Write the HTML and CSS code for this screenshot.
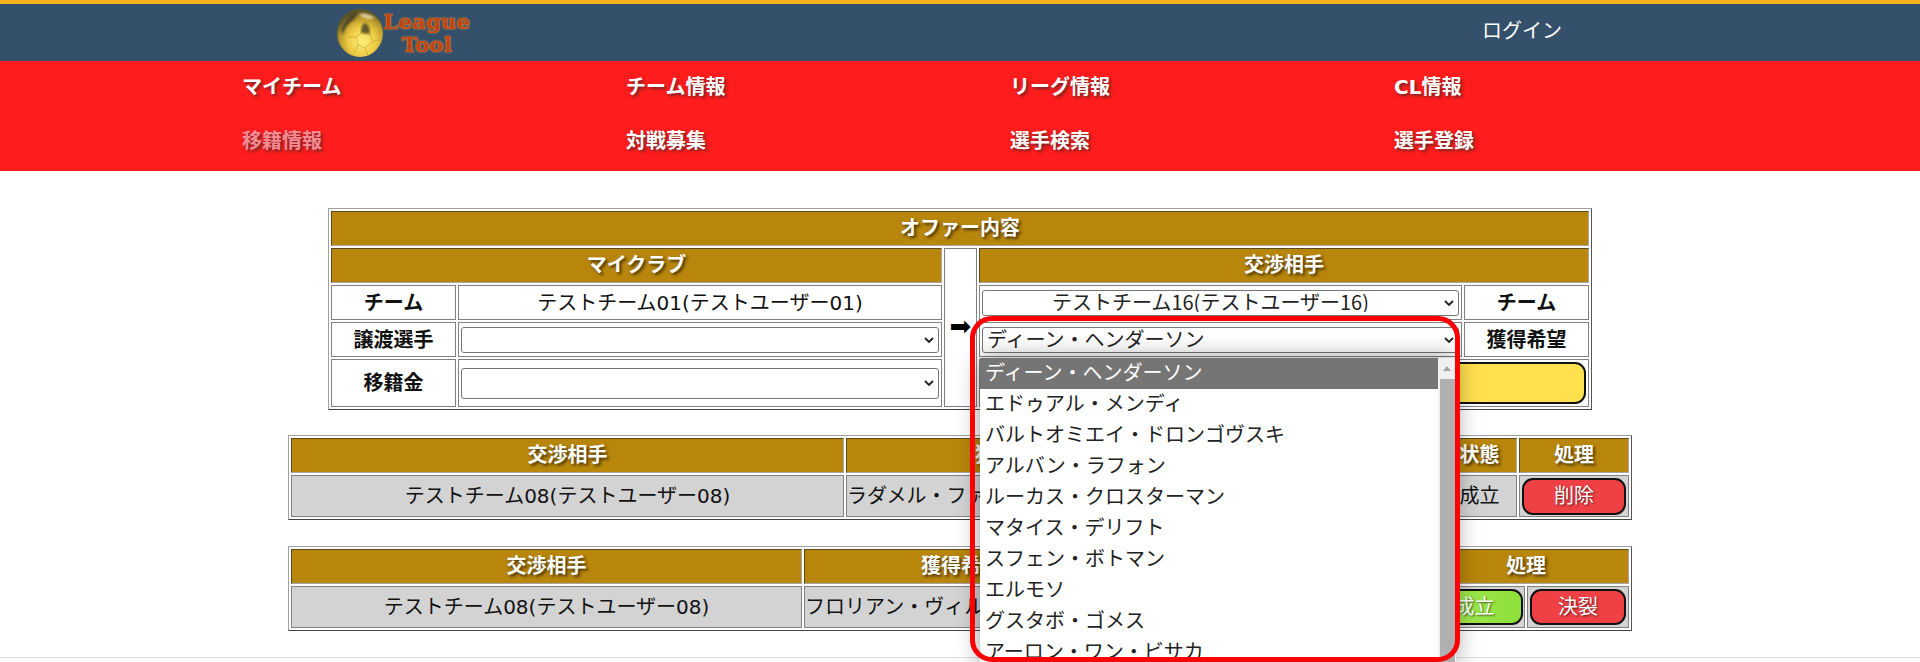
FILE: index.html
```html
<!DOCTYPE html>
<html lang="ja">
<head>
<meta charset="utf-8">
<title>League Tool</title>
<link rel="stylesheet" href="styles.css">
</head>
<body>
<header class="topbar">
  <a class="logo">
    <svg class="ball" viewBox="0 0 46 48" width="46" height="48">
      <defs>
        <radialGradient id="gold" cx="55%" cy="68%" r="62%">
          <stop offset="0" stop-color="#fdf07e"/>
          <stop offset=".5" stop-color="#ecca42"/>
          <stop offset=".82" stop-color="#b3942a"/>
          <stop offset="1" stop-color="#5f5426"/>
        </radialGradient>
        <filter id="soft"><feGaussianBlur stdDeviation="1.1"/></filter>
      </defs>
      <ellipse cx="23" cy="24" rx="23" ry="24" fill="url(#gold)"/>
      <path d="M4 20 Q9 7 20 3 Q20 9 14 13 Q8 17 6 26 Z" fill="#3e3a28" opacity=".8" filter="url(#soft)"/>
      <path d="M22 5 Q30 3 38 9 Q32 11 28 9 Q24 8 22 5 Z" fill="#f4ecc0" opacity=".7" filter="url(#soft)"/>
      <path d="M24 24 Q24 15 28 14 Q33 16 33 25 Z" fill="#4e4526" opacity=".85" filter="url(#soft)"/>
      <path d="M19 28 L24 24 L33 25 L36 33 L28 39 L21 36 Z M19 28 L10 28 M36 33 L43 30 M21 36 L17 44 M28 39 L31 46" fill="none" stroke="#b4951f" stroke-width=".6" opacity=".8"/>
    </svg>
    <span class="logo-text"><span>League</span><span>Tool</span></span>
  </a>
  <a class="login">ログイン</a>
</header>
<nav class="mainnav">
  <a class="navlink">マイチーム</a>
  <a class="navlink">チーム情報</a>
  <a class="navlink">リーグ情報</a>
  <a class="navlink">CL情報</a>
  <a class="navlink navlink-active">移籍情報</a>
  <a class="navlink">対戦募集</a>
  <a class="navlink">選手検索</a>
  <a class="navlink">選手登録</a>
</nav>
<main class="content">
  <table class="grid offer">
    <colgroup><col class="o1"><col class="o2"><col class="o3"><col class="o4"><col class="o5"></colgroup>
    <tr><th colspan="5">オファー内容</th></tr>
    <tr><th colspan="2">マイクラブ</th><td rowspan="4" class="arrow">➡</td><th colspan="2">交渉相手</th></tr>
    <tr>
      <td class="label">チーム</td><td>テストチーム01(テストユーザー01)</td>
      <td class="field"><select class="sel sel-center"><option>テストチーム16(テストユーザー16)</option></select></td>
      <td class="label">チーム</td>
    </tr>
    <tr>
      <td class="label">譲渡選手</td><td class="field"><select class="sel"><option></option></select></td>
      <td class="field"><select class="sel"><option>ディーン・ヘンダーソン</option></select></td>
      <td class="label">獲得希望</td>
    </tr>
    <tr class="tall">
      <td class="label">移籍金</td><td class="field"><select class="sel sel-tall"><option></option></select></td>
      <td colspan="2" class="field"><button class="btn btn-yellow btn-offer">オファー</button></td>
    </tr>
  </table>

  <table class="grid list list-sent">
    <colgroup><col class="a1"><col class="a2"><col class="a3"><col class="a4"><col class="a5"></colgroup>
    <tr><th>交渉相手</th><th>獲得希望</th><th>移籍金</th><th>状態</th><th>処理</th></tr>
    <tr class="data">
      <td>テストチーム08(テストユーザー08)</td><td class="left">ラダメル・ファルカオ</td><td>100億</td><td>成立</td>
      <td class="field"><button class="btn btn-red btn-del">削除</button></td>
    </tr>
  </table>

  <table class="grid list list-got">
    <colgroup><col class="b1"><col class="b2"><col class="b3"><col class="b4"><col class="b5"></colgroup>
    <tr><th>交渉相手</th><th>獲得希望</th><th>移籍金</th><th colspan="2">処理</th></tr>
    <tr class="data">
      <td>テストチーム08(テストユーザー08)</td><td class="left">フロリアン・ヴィルツ</td><td>100億</td>
      <td class="field field-ok"><button class="btn btn-green btn-ok">成立</button></td>
      <td class="field"><button class="btn btn-red btn-no">決裂</button></td>
    </tr>
  </table>
</main>
<footer class="foot"></footer>

<div class="popup">
  <ul class="opts">
    <li class="opt opt-on">ディーン・ヘンダーソン</li>
    <li class="opt">エドゥアル・メンディ</li>
    <li class="opt">バルトオミエイ・ドロンゴヴスキ</li>
    <li class="opt">アルバン・ラフォン</li>
    <li class="opt">ルーカス・クロスターマン</li>
    <li class="opt">マタイス・デリフト</li>
    <li class="opt">スフェン・ボトマン</li>
    <li class="opt">エルモソ</li>
    <li class="opt">グスタボ・ゴメス</li>
    <li class="opt">アーロン・ワン・ビサカ</li>
  </ul>
  <div class="sbar"><span class="sbar-up"></span><span class="sbar-thumb"></span></div>
</div>
<div class="marker"></div>
</body>
</html>
```
FILE: styles.css
```css
* { box-sizing: border-box; }
html, body { margin: 0; height: 662px; overflow: hidden; }
body {
  position: relative;
  background: #fff;
  color: #111;
  font: 20px/26px "DejaVu Sans", "Noto Sans CJK JP", sans-serif;
}

.topbar {
  height: 61px;
  border-top: 4px solid #f5b31b;
  background: #34506b;
  display: flex;
  align-items: center;
  padding: 0 358px 0 337px;
}
.logo { display: flex; align-items: center; }
.ball { display: block; }
.logo-text {
  display: flex;
  flex-direction: column;
  align-items: center;
  font: bold 21px/23px "DejaVu Serif", "Liberation Serif", serif;
  letter-spacing: .3px;
  color: #bf4412;
  text-shadow: 0 0 1px #f0a040, 0 0 2px #e09030;
  width: 88px;
  margin-top: 1px;
}
.login { margin-left: auto; color: #fff; padding-bottom: 4px; }

.mainnav {
  height: 110px;
  background: #ff1c1c;
  display: grid;
  grid-template-columns: repeat(4, 384px);
  grid-auto-rows: 54px;
  align-items: center;
  padding-left: 242px;
}
.navlink {
  color: #fff;
  font-weight: 700;
  padding-bottom: 3px;
  text-shadow: 2px 2px 3px rgba(70, 40, 40, .75);
}
.navlink-active { color: #f58a92; }

.content { padding-top: 37px; }
.grid {
  border-collapse: separate;
  border-spacing: 2px;
  border: 1px solid;
  border-color: #a0a0a0 #555 #444 #a0a0a0;
  table-layout: fixed;
  margin: 0 auto;
  text-align: center;
}
.grid tr { height: 35px; }
.grid th, .grid td { padding: 0; border: 1px solid #808080; overflow: hidden; white-space: nowrap; }
.grid th {
  background: #b8860b;
  color: #fff;
  font-weight: 700;
  padding-bottom: 2px;
  border-color: #5a4a20 #a8a8a8 #a8a8a8 #5a4a20;
  text-shadow: 2px 2px 3px rgba(40, 30, 10, .8);
}
.grid .tall { height: 48px; }
.grid .data { height: 42px; }

.offer { width: 1264px; }
.o1, .o5 { width: 125px; }
.o2 { width: 484px; }
.o3 { width: 33px; }
.o4 { width: 483px; }
.label { font-weight: 700; }
.grid .arrow { font-family: "DejaVu Sans", sans-serif; font-size: 26px; color: #000; padding-bottom: 4px; }
.grid .field { padding: 0 2px; }
.grid .field-ok { padding: 0 1px 0 2px; }
.sel {
  display: block;
  width: 100%;
  height: 26px;
  appearance: none;
  font: 20px/21px "Noto Sans CJK JP", sans-serif;
  padding: 0 24px 3px 4px;
  background: #fff url("data:image/svg+xml,%3Csvg xmlns='http://www.w3.org/2000/svg' width='10' height='6' viewBox='0 0 10 6'%3E%3Cpath d='M1 1l4 4 4-4' fill='none' stroke='%23222' stroke-width='1.8'/%3E%3C/svg%3E") no-repeat right 4px center;
  color: #222;
  border: 1px solid #767676;
  border-radius: 3px;
}
.sel-center { text-align: center; }
.sel-tall { height: 31px; }

.list { width: 1344px; margin-top: 25px; }
.list .data td { background: #d3d3d3; }
.list-got { margin-top: 26px; }
.a1 { width: 553px; }
.a2 { width: 338px; }
.a3 { width: 254px; }
.a4 { width: 75px; }
.a5 { width: 110px; }
.b1 { width: 511px; }
.b2 { width: 314px; }
.b3 { width: 301px; }
.b4 { width: 102px; }
.b5 { width: 102px; }
.left { text-align: left; }

.btn {
  display: block;
  font: inherit;
  color: #fff;
  border: 2px solid #111;
  border-radius: 11px;
  padding: 0;
  width: 100%;
  text-shadow: 1px 1px 2px rgba(0, 0, 0, .6);
}
.btn-yellow { background: #ffe04e; height: 42px; }
.btn-red { background: #ef4045; }
.btn-green { background: linear-gradient(90deg, #a6ec55, #8ee03a); }
.btn-del { height: 37px; }
.btn-ok, .btn-no { height: 36px; }

.foot { position: absolute; left: 0; right: 0; top: 657px; height: 5px; background: #fafafa; border-top: 1px solid #ddd; }

.popup {
  position: absolute;
  left: 980px;
  top: 358px;
  width: 476px;
  height: 304px;
  background: #fff;
  display: flex;
  box-shadow: 0 0 22px rgba(0, 0, 0, .4);
}
.opts { list-style: none; margin: 0; padding: 0; flex: 1; overflow: hidden; color: #222; font-family: "Noto Sans CJK JP", sans-serif; }
.opt { height: 31px; line-height: 28px; padding-left: 5px; white-space: nowrap; }
.opt-on { background: #757575; color: #fff; }
.sbar { width: 18px; background: #f0f0f0; display: flex; flex-direction: column; align-items: center; }
.sbar-up {
  flex: none;
  width: 0;
  height: 0;
  box-sizing: content-box;
  border-left: 4px solid transparent;
  border-right: 4px solid transparent;
  border-bottom: 5px solid #a3a3a3;
  border-top: 8px solid transparent;
  margin-bottom: 8px;
}
.sbar-thumb { flex: 1; width: 15px; background: #b0b0b0; }

.marker {
  position: absolute;
  left: 970px;
  top: 316px;
  width: 490px;
  height: 346px;
  border: 5px solid #f00;
  border-radius: 22px;
}
```
